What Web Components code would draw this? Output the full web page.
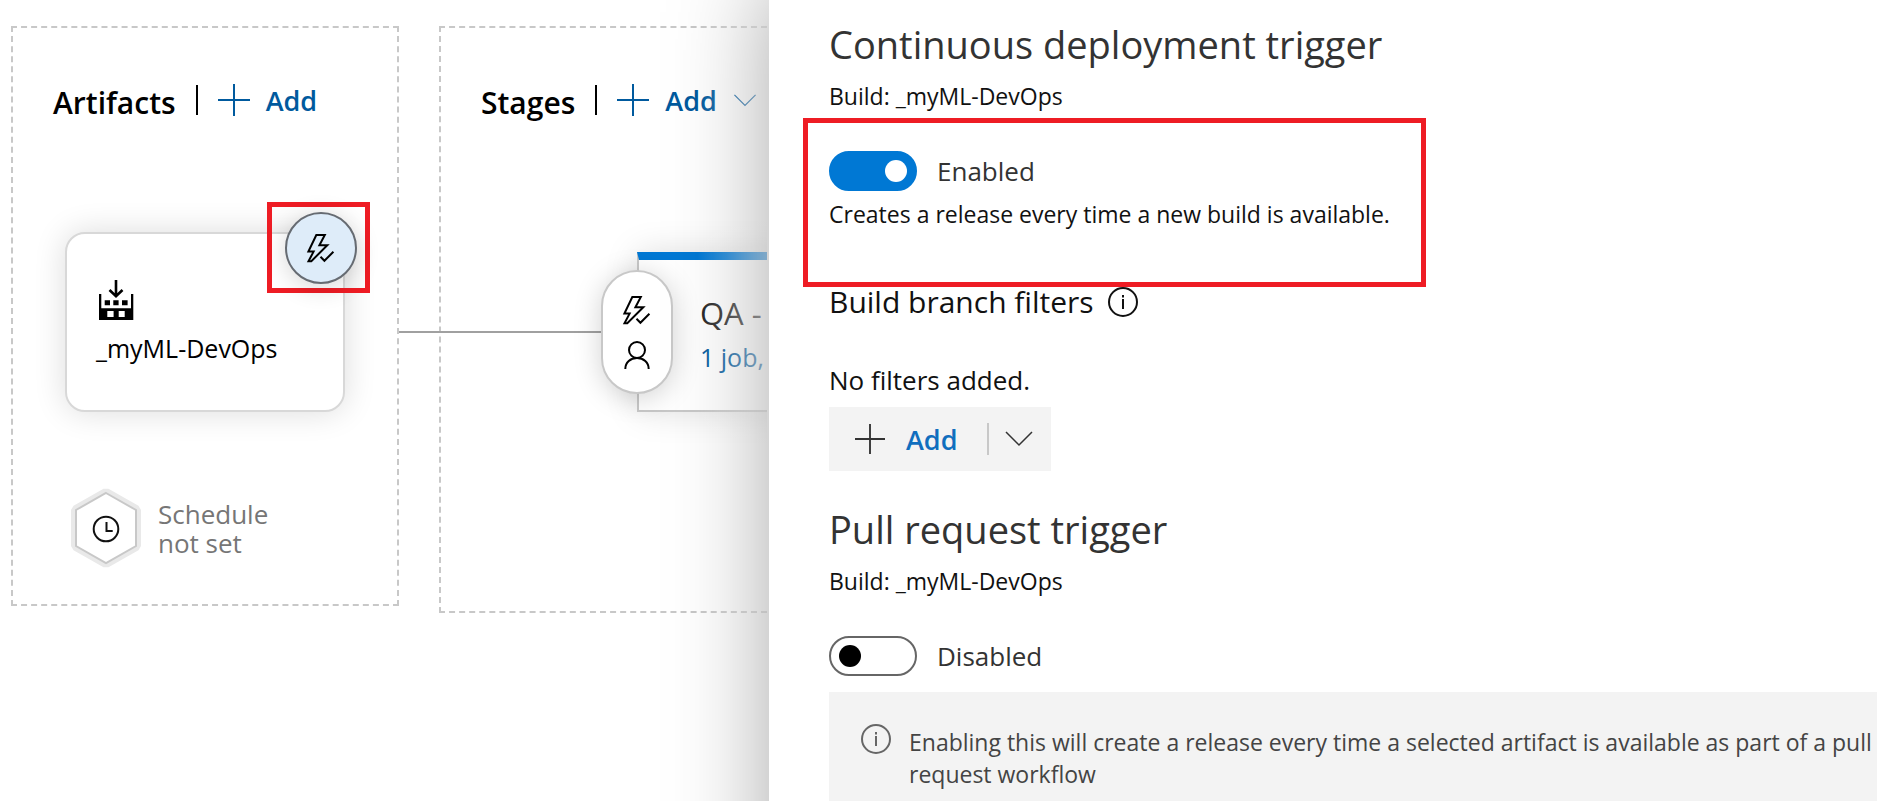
<!DOCTYPE html>
<html lang="en">
<head>
<meta charset="utf-8">
<title>Release pipeline - Continuous deployment trigger</title>
<style>
  html, body { margin: 0; height: 100%; }
  body {
    font-family: "Open Sans", "Noto Sans", sans-serif;
    color: #111;
    background: #fff;
    overflow: hidden;
    --blue: #0078d4;
    --link: #005a9e;
    --line: #c8c8c8;
    --mark: #ee1c24;
  }
</style>
</head>
<body>
<release-editor></release-editor>

<script>
const define = (name, html, setup) => {
  const template = document.createElement('template');
  template.innerHTML = html;
  customElements.define(name, class extends HTMLElement {
    constructor() {
      super();
      this.attachShadow({ mode: 'open' }).append(template.content.cloneNode(true));
    }
    connectedCallback() { if (setup) setup(this, this.shadowRoot); }
  });
};

const ICONS = {
  plus: ['0 0 32 32', '<path d="M16 0V32M0 16H32"/>'],
  chevron: ['0 0 28 16', '<path d="M1 1L14 14L27 1"/>'],
  bolt: ['0 0 28 28', '<path d="M9.3 1H17.8L12.4 11.3H20.3L4.3 27.2H1.5L6.6 17.6H1.4Z"/><path d="M13.5 22.8L17.4 26.8L26.4 17.8"/>'],
  person: ['0 0 28 28', '<circle cx="14" cy="9" r="8"/><path d="M2.3 28C2.3 21.5 7.5 17 14 17S25.7 21.5 25.7 28"/>'],
  info: ['0 0 30 30', '<circle cx="15" cy="15" r="14"/><path d="M15 12V22M15 8V10.5"/>'],
  build: ['0 0 40 40', '<path d="M20 0V16M13.5 10L20 16.3L26.5 10" stroke-width="2.6"/><g fill="currentColor" stroke="none"><path d="M3 14h2.3v14.3h29.7V14h2.3v26H3Z M11.3 31v6h6.3v-6Z M22.7 31v6h6v-6Z" fill-rule="evenodd"/><path d="M8.7 20.3h5.3v5h-5.3zM17.3 20.3h5.3v5h-5.3zM26 20.3h5.6v5h-5.6z"/></g>'],
  schedule: ['0 0 72 80', '<path d="M36 5L66 22V58L36 75L6 58V22Z" stroke="#e9e9e9" stroke-width="10" stroke-linejoin="bevel"/><path d="M36 5L66 22V58L36 75L6 58V22Z" fill="#fff" stroke="#c8c8c8"/><circle cx="36" cy="41" r="12.3"/><path d="M36.5 34V43H42.7"/>']
};

define('line-icon', `
  <style>
    :host { display: inline-flex; flex: none; width: 28px; height: 28px; }
    svg { width: 100%; height: 100%; fill: none; stroke: currentColor; stroke-width: var(--stroke, 2); overflow: visible; }
  </style>
  <svg aria-hidden="true"></svg>`, (host, root) => {
  const [box, shapes] = ICONS[host.getAttribute('name')];
  const svg = root.querySelector('svg');
  svg.setAttribute('viewBox', box);
  svg.innerHTML = shapes;
});

define('pipeline-column', `
  <style>
    :host { display: block; box-sizing: border-box; border: 2px dashed var(--line); padding-top: 48px; }
    header { display: flex; align-items: center; gap: 20px; height: 48px; padding-left: 40px; color: #000; }
    h2 { margin: 0; padding-top: 6px; font-size: 30px; font-weight: 600; line-height: 42px; }
    i { width: 2px; height: 30px; background: #000; }
    button {
      display: flex; align-items: center; gap: 16px; padding: 0; border: 0; background: none;
      font: 600 27px/40px "Open Sans", "Noto Sans", sans-serif; color: var(--link);
    }
    button span { padding-top: 2px; }
    line-icon { width: 32px; height: 32px; }
    .more { display: none; width: 24px; height: 13px; }
    :host([menu]) .more { display: inline-flex; --stroke: 1.5; }
  </style>
  <header>
    <h2><slot name="title"></slot></h2>
    <i></i>
    <button type="button"><line-icon name="plus"></line-icon><span>Add</span><line-icon class="more" name="chevron"></line-icon></button>
  </header>
  <slot></slot>`);

define('artifact-card', `
  <style>
    :host {
      display: block; position: relative; box-sizing: border-box; width: 280px; height: 180px;
      padding: 46px 29px 0; border: 2px solid #d8d8d8; border-radius: 20px; background: #fff;
      box-shadow: 0 0 32px rgba(0, 0, 0, .14); font-size: 25px; line-height: 32px; color: #000;
    }
    .build { display: flex; width: 40px; height: 40px; margin-bottom: 12px; }
    .mark {
      position: absolute; top: -32px; right: -27px; display: flex;
      padding: 5px 8px 4px 13px; border: 5px solid var(--mark);
    }
    button {
      display: flex; align-items: center; justify-content: center; width: 72px; height: 72px; padding: 0;
      border: 2px solid #666b72; border-radius: 50%; background: #deecf9; color: #000;
      box-shadow: 0 4px 24px rgba(0, 0, 0, .16);
    }
  </style>
  <line-icon class="build" name="build"></line-icon>
  <slot></slot>
  <div class="mark"><button type="button" aria-label="Continuous deployment trigger"><line-icon name="bolt"></line-icon></button></div>`);

define('schedule-status', `
  <style>
    :host { display: flex; align-items: center; gap: 16px; font-size: 26px; line-height: 29px; color: #767676; }
    line-icon { width: 72px; height: 80px; color: #111; }
    div { width: 120px; padding-top: 2px; }
  </style>
  <line-icon name="schedule"></line-icon>
  <div><slot></slot></div>`);

define('stage-card', `
  <style>
    :host {
      display: block; position: relative; box-sizing: border-box; width: 320px; height: 160px;
      padding: 31px 0 0 61px; border: 2px solid var(--line); border-top: 8px solid var(--blue);
      background: #fff; box-shadow: 0 0 32px rgba(0, 0, 0, .13); line-height: 44px; white-space: nowrap;
    }
    h3 { margin: 0; font-size: 31px; font-weight: 400; color: #222; }
    a { font-size: 25px; color: var(--link); text-decoration: none; }
    .wire { position: absolute; top: 71px; right: 100%; width: 240px; height: 2px; background: #a0a0a0; }
    .conditions {
      position: absolute; top: 10px; left: -38px; box-sizing: border-box; width: 72px; height: 124px;
      display: flex; flex-direction: column; align-items: center; justify-content: center; gap: 17px;
      padding: 0; border: 2px solid var(--line); border-radius: 36px; background: #fff; color: #000;
      box-shadow: 0 4px 28px rgba(0, 0, 0, .18);
    }
  </style>
  <h3><slot name="name"></slot></h3>
  <a href="#jobs"><slot name="jobs"></slot></a>
  <span class="wire"></span>
  <button class="conditions" type="button" aria-label="Pre-deployment conditions">
    <line-icon name="bolt"></line-icon><line-icon name="person"></line-icon>
  </button>`);

define('pipeline-canvas', `
  <style>
    :host { display: block; position: relative; padding-right: 2px; min-width: 0; }
    .view { height: 100%; box-sizing: border-box; overflow: hidden; display: flex; align-items: flex-start; gap: 40px; padding: 26px 0 0 11px; }
    pipeline-column { flex: none; }
    .artifacts { width: 388px; padding-bottom: 36px; }
    .stages { width: 640px; padding-bottom: 199px; }
    artifact-card { margin: 108px 0 0 52px; }
    schedule-status { margin: 76px 0 0 57px; }
    stage-card { margin: 128px 0 0 196px; }
    :host::after {
      content: ""; position: absolute; inset: 0 0 0 auto; width: 72px; pointer-events: none;
      background: linear-gradient(to right, rgba(255, 255, 255, 0), rgba(255, 255, 255, .2) 40%, rgba(255, 255, 255, .62));
    }
  </style>
  <div class="view">
    <pipeline-column class="artifacts">
      <span slot="title">Artifacts</span>
      <artifact-card>_myML-DevOps</artifact-card>
      <schedule-status>Schedule not set</schedule-status>
    </pipeline-column>
    <pipeline-column class="stages" menu>
      <span slot="title">Stages</span>
      <stage-card><span slot="name">QA -</span><span slot="jobs">1 job,</span></stage-card>
    </pipeline-column>
  </div>`);

define('toggle-switch', `
  <style>
    :host { display: block; }
    label { display: inline-flex; align-items: center; gap: 20px; font-size: 26px; line-height: 40px; color: #333; }
    input {
      appearance: none; flex: none; box-sizing: border-box; display: flex; align-items: center;
      width: 88px; height: 40px; margin: 0; padding: 0 8px; border: 2px solid #666; border-radius: 20px; background: #fff;
    }
    input::before { content: ""; width: 22px; height: 22px; border-radius: 50%; background: #000; }
    input:checked { justify-content: flex-end; border-color: var(--blue); background: var(--blue); }
    input:checked::before { background: #fff; }
  </style>
  <label><input type="checkbox" role="switch"><span><slot></slot></span></label>`, (host, root) => {
  root.querySelector('input').checked = host.hasAttribute('on');
});

define('split-button', `
  <style>
    :host { display: flex; align-items: center; width: fit-content; height: 64px; background: #f3f3f3; }
    button {
      display: flex; align-items: center; height: 100%; border: 0; background: none; color: #333;
      font: 600 27px/40px "Open Sans", "Noto Sans", sans-serif;
    }
    .main { gap: 21px; padding: 0 30px 0 26px; }
    .main line-icon { width: 30px; height: 30px; }
    .main span { padding-top: 2px; color: #106ebe; }
    i { width: 2px; height: 32px; background: var(--line); }
    .menu { padding: 0 18px 0 16px; --stroke: 1.5; }
    .menu line-icon { height: 16px; }
  </style>
  <button class="main" type="button"><line-icon name="plus"></line-icon><span><slot></slot></span></button>
  <i></i>
  <button class="menu" type="button" aria-label="More options"><line-icon name="chevron"></line-icon></button>`);

define('info-notice', `
  <style>
    :host { display: flex; align-items: flex-start; gap: 18px; padding: 32px 0 0 32px; background: #f3f3f3; color: #444; font-size: 23px; line-height: 32px; }
    line-icon { width: 30px; height: 30px; color: #666; }
    p { margin: 0; padding-top: 2px; }
  </style>
  <line-icon name="info"></line-icon>
  <p><slot></slot></p>`);

define('trigger-panel', `
  <style>
    :host { display: flex; flex-direction: column; position: relative; box-sizing: border-box; min-width: 0; padding: 18px 0 0 60px; background: #fff; font-size: 23px; line-height: 32px; }
    :host::before { content: ""; position: absolute; z-index: -1; inset: -20px -100px -200px 0; background: #fff; box-shadow: 0 0 90px rgba(0, 0, 0, .34); }
    h2 { margin: 0 0 10px; font-size: 38px; font-weight: 400; line-height: 52px; color: #333; }
    p { margin: 0; }
    .mark { width: fit-content; margin: 6px 0 0 -26px; padding: 28px 31px 52px 21px; border: 5px solid var(--mark); }
    .mark p { margin-top: 7px; }
    h3 { display: flex; align-items: center; gap: 14px; margin: 0 0 45px; font-size: 30px; font-weight: 400; line-height: 30px; }
    h3 line-icon { width: 30px; height: 30px; }
    .empty { margin-bottom: 9px; font-size: 26px; line-height: 36px; }
    split-button { margin-bottom: 32px; }
    .pull { margin: 39px 0 16px; }
    info-notice { flex: 1; }
  </style>
  <h2>Continuous deployment trigger</h2>
  <p>Build: _myML-DevOps</p>
  <div class="mark">
    <toggle-switch on>Enabled</toggle-switch>
    <p>Creates a release every time a new build is available.</p>
  </div>
  <h3>Build branch filters <line-icon name="info"></line-icon></h3>
  <p class="empty">No filters added.</p>
  <split-button>Add</split-button>
  <h2>Pull request trigger</h2>
  <p>Build: _myML-DevOps</p>
  <toggle-switch class="pull">Disabled</toggle-switch>
  <info-notice>Enabling this will create a release every time a selected artifact is available as part of a pull request workflow</info-notice>`);

define('release-editor', `
  <style>
    :host { display: grid; grid-template-columns: minmax(0, 769fr) minmax(0, 1108fr); min-height: 100vh; overflow: hidden; }
    trigger-panel { z-index: 1; }
  </style>
  <pipeline-canvas></pipeline-canvas>
  <trigger-panel></trigger-panel>`);
</script>
</body>
</html>
